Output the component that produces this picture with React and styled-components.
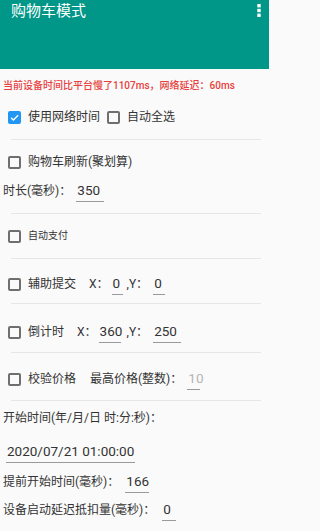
import React from "react";
import styled, { createGlobalStyle } from "styled-components";

const Global = createGlobalStyle`
  html, body { margin: 0; padding: 0; background: #fafafa; }
  * { box-sizing: border-box; }
`;

const Page = styled.div`
  width: 269px;
  min-height: 531px;
  background: #fafafa;
  font-family: Roboto, "Noto Sans CJK SC", sans-serif;
  color: #333;
  display: flex;
  flex-direction: column;
  overflow: hidden;
`;

const AppBar = styled.header`
  height: 69px;
  flex: none;
  background: #009688;
  display: flex;
  align-items: flex-start;
  justify-content: space-between;
  padding: 4px 8px 0 11px;
`;

const Title = styled.h1`
  margin: 0;
  font-size: 15px;
  line-height: 15px;
  font-weight: 400;
  color: #fff;
`;

const MenuButton = styled.div`
  width: 4px;
  height: 13px;
  display: flex;
  color: #fff;
`;

const Notice = styled.div`
  margin-top: 10px;
  padding-left: 3px;
  height: 14px;
  line-height: 14px;
  font-size: 10px;
  font-weight: 500;
  color: #e8403c;
  white-space: nowrap;
`;

const Row = styled.div`
  display: flex;
  align-items: center;
  height: ${(p) => p.$h || 24}px;
  margin-top: ${(p) => p.$mt || 0}px;
  padding-left: ${(p) => (p.$pl === undefined ? 8 : p.$pl)}px;
  white-space: nowrap;
`;

const Divider = styled.hr`
  margin: ${(p) => p.$mt || 0}px 8px 0 11px;
  border: 0;
  height: 1px;
  background: #e6e6e6;
  flex: none;
`;

const Box = styled.span`
  width: 13px;
  height: 13px;
  flex: none;
  border-radius: 2px;
  display: inline-flex;
  align-items: center;
  justify-content: center;
  margin-left: ${(p) => p.$ml || 0}px;
  background: ${(p) => (p.$checked ? "#2196f3" : "transparent")};
  border: ${(p) => (p.$checked ? "none" : "2px solid #6f6f6f")};
`;

const Label = styled.span`
  font-size: ${(p) => p.$fs || 12}px;
  line-height: 16px;
  margin-left: ${(p) => p.$ml || 0}px;
  color: #333;
`;

const Field = styled.span`
  display: inline-block;
  width: ${(p) => p.$w}px;
  margin-left: ${(p) => p.$ml || 0}px;
  padding: 2px 0 3px 1px;
  font-size: ${(p) => p.$fs || 13.5}px;
  line-height: 16px;
  border-bottom: 1px solid #9a9a9a;
  color: ${(p) => (p.$muted ? "#b5b5b5" : "#333")};
  flex: none;
`;

const Check = ({ checked, ml }) => (
  <Box $checked={checked} $ml={ml}>
    {checked && (
      <svg width="11" height="11" viewBox="0 0 24 24">
        <path d="M4.5 12.5l5 5L20 7" fill="none" stroke="#fff" strokeWidth="3" />
      </svg>
    )}
  </Box>
);

export default function App() {
  return (
    <>
      <Global />
      <Page>
        <AppBar>
          <Title>购物车模式</Title>
          <MenuButton>
            <svg width="4" height="13" viewBox="0 0 4 13">
              <rect x="0.3" y="0" width="3.4" height="3.4" fill="#fff" />
              <rect x="0.3" y="4.8" width="3.4" height="3.4" fill="#fff" />
              <rect x="0.3" y="9.6" width="3.4" height="3.4" fill="#fff" />
            </svg>
          </MenuButton>
        </AppBar>

        <Notice>当前设备时间比平台慢了1107ms，网络延迟：60ms</Notice>

        <Row $mt={12}>
          <Check checked />
          <Label $ml={7}>使用网络时间</Label>
          <Check ml={7} />
          <Label $ml={7}>自动全选</Label>
        </Row>

        <Divider $mt={10} />

        <Row $mt={10}>
          <Check />
          <Label $ml={7}>购物车刷新(聚划算)</Label>
        </Row>
        <Row $mt={5} $pl={3}>
          <Label>时长(毫秒)：</Label>
          <Field $w={28} $ml={5}>350</Field>
        </Row>

        <Divider $mt={10} />

        <Row $mt={10}>
          <Check />
          <Label $ml={7} $fs={10}>自动支付</Label>
        </Row>

        <Divider $mt={10} />

        <Row $mt={13}>
          <Check />
          <Label $ml={7}>辅助提交</Label>
          <Label $ml={13}>X：</Label>
          <Field $w={11} $ml={3}>0</Field>
          <Label $ml={4}>,Y：</Label>
          <Field $w={12} $ml={5}>0</Field>
        </Row>

        <Divider $mt={7} />

        <Row $mt={16}>
          <Check />
          <Label $ml={7}>倒计时</Label>
          <Label $ml={13}>X：</Label>
          <Field $w={22} $ml={2}>360</Field>
          <Label $ml={6}>,Y：</Label>
          <Field $w={28} $ml={5}>250</Field>
        </Row>

        <Divider $mt={8} />

        <Row $mt={14}>
          <Check />
          <Label $ml={7}>校验价格</Label>
          <Label $ml={14}>最高价格(整数)：</Label>
          <Field $w={13} $ml={5} $muted>10</Field>
        </Row>

        <Divider $mt={9} />

        <Row $mt={7} $h={20} $pl={3}>
          <Label>开始时间(年/月/日 时:分:秒)：</Label>
        </Row>
        <Row $mt={12} $pl={6}>
          <Field $w={129}>2020/07/21 01:00:00</Field>
        </Row>
        <Row $mt={6} $pl={3}>
          <Label>提前开始时间(毫秒)：</Label>
          <Field $w={24} $ml={6}>166</Field>
        </Row>
        <Row $mt={4} $pl={3}>
          <Label>设备启动延迟抵扣量(毫秒)：</Label>
          <Field $w={14} $ml={7}>0</Field>
        </Row>
      </Page>
    </>
  );
}
